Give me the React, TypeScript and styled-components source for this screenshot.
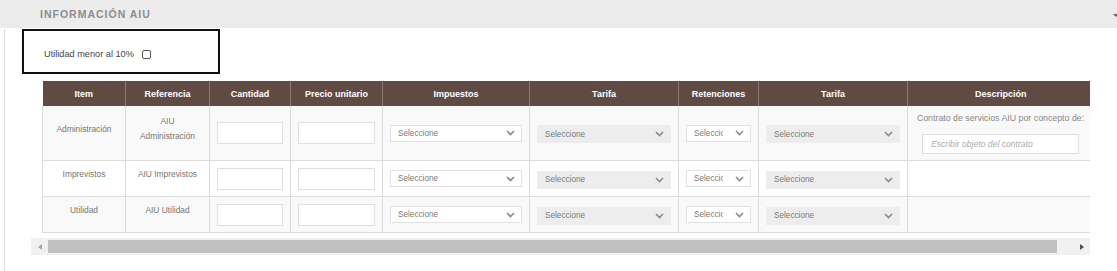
import styled, { createGlobalStyle } from 'styled-components'

const GlobalStyle = createGlobalStyle`
  body {
    margin: 0;
    background: #fff;
    font-family: "Liberation Sans", Arial, sans-serif;
  }
`

type Row = { item: string; ref: string[]; desc?: boolean }

const rows: Row[] = [
  { item: 'Administración', ref: ['AIU', 'Administración'], desc: true },
  { item: 'Imprevistos', ref: ['AIU Imprevistos'] },
  { item: 'Utilidad', ref: ['AIU Utilidad'] },
]

const columns = [
  { label: 'Item', width: 83 },
  { label: 'Referencia', width: 84 },
  { label: 'Cantidad', width: 81 },
  { label: 'Precio unitario', width: 92 },
  { label: 'Impuestos', width: 147 },
  { label: 'Tarifa', width: 149 },
  { label: 'Retenciones', width: 80 },
  { label: 'Tarifa', width: 149 },
  { label: 'Descripción', width: 186 },
]

const Chevron = () => (
  <svg width="9" height="6" viewBox="0 0 9 6">
    <polyline points="1,1 4.5,4.5 8,1" fill="none" stroke="#8a8a8a" strokeWidth="1.6" />
  </svg>
)

const Select = ({ disabled }: { disabled?: boolean }) => (
  <SelectBox $disabled={disabled}>
    <SelectText>Seleccione</SelectText>
    <Chevron />
  </SelectBox>
)

export default function App() {
  return (
    <>
      <GlobalStyle />
      <Panel>
        <Header>
          <Title>INFORMACIÓN AIU</Title>
          <Caret />
        </Header>
        <Body>
          <CheckArea>
            <CheckLabel>Utilidad menor al 10%</CheckLabel>
            <CheckBox />
          </CheckArea>
          <ScrollArea>
            <Viewport>
              <Table>
                <colgroup>
                  {columns.map((c, i) => (
                    <col key={i} style={{ width: c.width }} />
                  ))}
                </colgroup>
                <thead>
                  <tr>
                    {columns.map((c, i) => (
                      <Th key={i}>{c.label}</Th>
                    ))}
                  </tr>
                </thead>
                <tbody>
                  {rows.map((r) => (
                    <Tr key={r.item}>
                      <Td>
                        <CellText>{r.item}</CellText>
                      </Td>
                      <Td>
                        <CellText>
                          {r.ref.map((l, i) => (
                            <span key={i}>
                              {l}
                              {i < r.ref.length - 1 && <br />}
                            </span>
                          ))}
                        </CellText>
                      </Td>
                      <Td>
                        <Input />
                      </Td>
                      <Td>
                        <Input />
                      </Td>
                      <Td>
                        <Select />
                      </Td>
                      <Td>
                        <Select disabled />
                      </Td>
                      <Td>
                        <Select />
                      </Td>
                      <Td>
                        <Select disabled />
                      </Td>
                      <Td>
                        {r.desc && (
                          <>
                            <DescText>Contrato de servicios AIU por concepto de:</DescText>
                            <DescInput placeholder="Escribir objeto del contrato" />
                          </>
                        )}
                      </Td>
                    </Tr>
                  ))}
                </tbody>
              </Table>
            </Viewport>
            <Scrollbar>
              <Arrow $dir="left" />
              <Thumb />
              <Arrow $dir="right" />
            </Scrollbar>
          </ScrollArea>
        </Body>
      </Panel>
    </>
  )
}

const Panel = styled.div`
  width: 1117px;
  height: 271px;
  overflow: hidden;
`

//Header
const Header = styled.div`
  height: 28px;
  background: #ececec;
  display: flex;
  align-items: center;
  justify-content: space-between;
  padding-left: 40px;
`
const Title = styled.h3`
  margin: 0;
  font-size: 10.5px;
  font-weight: bold;
  letter-spacing: 1px;
  color: #8c8c8c;
`
const Caret = styled.span`
  width: 0;
  height: 0;
  margin-right: -2px;
  margin-top: 2px;
  border-left: 3px solid transparent;
  border-right: 3px solid transparent;
  border-top: 3px solid #666;
`

//Body
const Body = styled.div`
  margin-left: 4px;
  height: 243px;
  border-left: 1px solid #dcdcdc;
`
const CheckArea = styled.div`
  margin-left: 17px;
  margin-top: 1px;
  display: flex;
  align-items: center;
  padding: 5px 0 0 20px;
  box-sizing: border-box;
  height: 45px;
  width: 198px;
  border: 2px solid #111;
`
const CheckLabel = styled.span`
  font-size: 9.2px;
  color: #444;
`
const CheckBox = styled.span`
  width: 7px;
  height: 7px;
  margin-left: 8px;
  border: 1px solid #555;
  border-radius: 2px;
  background: #fff;
`

const ScrollArea = styled.div`
  margin: 7px 0 0 26px;
  width: 1059px;
`
const Viewport = styled.div`
  overflow: hidden;
  padding-left: 11px;
`
const Table = styled.table`
  border-collapse: collapse;
  table-layout: fixed;
  width: 1051px;
`
const Th = styled.th`
  height: 25px;
  padding: 0 4px;
  background: #604b44;
  color: #fff;
  font-size: 9px;
  font-weight: bold;
  text-align: center;
  border-left: 1px solid #8c7b74;
  &:first-child {
    border-left: none;
  }
`
const Tr = styled.tr`
  &:nth-child(odd) {
    background: #f9f9f9;
  }
  &:nth-child(even) {
    background: #fff;
  }
`
const Td = styled.td`
  padding: 6px 7px;
  border: 1px solid #dcdcdc;
  border-top: none;
  vertical-align: middle;
  text-align: center;
`
const CellText = styled.p`
  margin: 0 0 8px;
  font-size: 8.4px;
  line-height: 15px;
  color: #777;
`
const Input = styled.input`
  display: block;
  width: 100%;
  height: 22px;
  box-sizing: border-box;
  border: 1px solid #e0e0e0;
  background: #fff;
  outline: none;
`
const SelectBox = styled.div<{ $disabled?: boolean }>`
  display: flex;
  align-items: center;
  box-sizing: border-box;
  height: ${(p) => (p.$disabled ? '18px' : '17px')};
  margin-top: ${(p) => (p.$disabled ? '2px' : '0')};
  padding: 0 6px 0 7px;
  background: ${(p) => (p.$disabled ? '#ededed' : '#fff')};
  border: 1px solid ${(p) => (p.$disabled ? '#ededed' : '#e2e2e2')};
  svg {
    flex: none;
    margin-left: 12px;
  }
`
const SelectText = styled.span`
  flex: 1;
  min-width: 0;
  overflow: hidden;
  white-space: nowrap;
  text-align: left;
  font-size: 8.2px;
  color: #7a7a7a;
`
const DescText = styled.p`
  margin: 0 0 10px;
  font-size: 8.8px;
  line-height: 12px;
  color: #888;
`
const DescInput = styled.input`
  display: block;
  margin: 0 auto;
  width: 157px;
  height: 20px;
  box-sizing: border-box;
  padding: 0 8px;
  border: 1px solid #e0e0e0;
  background: #fff;
  font-family: inherit;
  font-size: 8.6px;
  outline: none;
  &::placeholder {
    color: #ababab;
    font-style: italic;
  }
`

//Scrollbar
const Scrollbar = styled.div`
  margin-top: 5px;
  height: 17px;
  background: #f1f1f1;
  display: flex;
  align-items: center;
`
const Thumb = styled.div`
  width: 1009px;
  height: 13px;
  background: #c1c1c1;
`
const Arrow = styled.span<{ $dir: 'left' | 'right' }>`
  width: 17px;
  display: flex;
  justify-content: center;
  margin-left: ${(p) => (p.$dir === 'right' ? 'auto' : '0')};
  &::before {
    content: '';
    border-top: 3.5px solid transparent;
    border-bottom: 3.5px solid transparent;
    ${(p) =>
      p.$dir === 'left'
        ? 'border-right: 4px solid #a3a3a3;'
        : 'border-left: 4px solid #505050;'}
  }
`
